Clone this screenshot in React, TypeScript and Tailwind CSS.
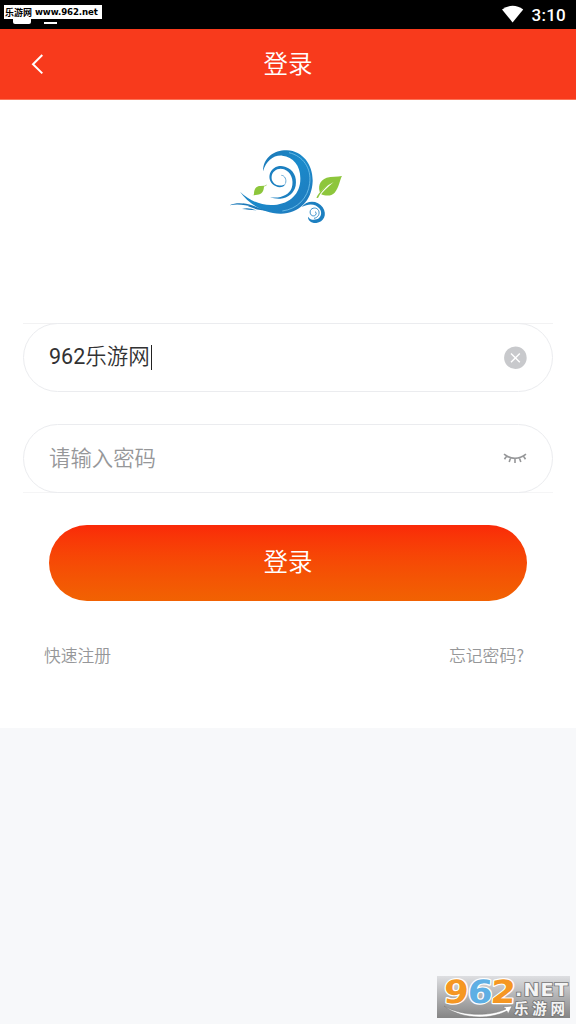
import React from "react";

function StatusBar() {
  return (
    <div className="relative flex h-[29px] items-start justify-end bg-black pr-[10px]">
      <div className="absolute left-[13px] top-[10px] h-[14px] w-[18px] rounded-[2px] bg-white" />
      <div className="absolute left-[44px] top-[22px] h-[2px] w-[13px] bg-white" />
      <div className="absolute left-[4px] top-[5px] flex h-[14px] w-[98px] items-center gap-[3px] whitespace-nowrap bg-white pl-px font-bold leading-none text-black">
        <span className="font-['Noto_Sans_CJK_SC',sans-serif] text-[9px]">乐游网</span>
        <span className="font-['DejaVu_Sans',sans-serif] text-[8.6px] tracking-[-0.1px]">www.962.net</span>
      </div>
      <svg className="mt-[5px] h-[18px] w-[22px]" viewBox="0 0 22 18" fill="#fff">
        <path d="M0 4.4Q5 .8 10.6 .8T21.2 4.4L10.6 17.4Z" />
      </svg>
      <span className="ml-[8px] mt-[5px] font-['Roboto',sans-serif] text-[17px] font-medium leading-[20px] tracking-[0.25px] text-white">3:10</span>
    </div>
  );
}

function Logo() {
  return (
    <svg className="h-[90px] w-[135px]" viewBox="0 0 405 270" fill="none">
      <defs>
        <linearGradient id="wave" x1="0" y1="0" x2="1" y2="1">
          <stop offset="0" stopColor="#1f6fab" />
          <stop offset=".5" stopColor="#1a8acb" />
          <stop offset="1" stopColor="#2178bb" />
        </linearGradient>
      </defs>
      <path fill="url(#wave)" d="M129 94C130 51 164 30 201 31C249 33 279 75 278 124C276 184 235 222 181 221C127 219 84 189 60 155C88 182 124 198 162 195C212 191 241 160 241 117C242 77 220 51 187 47C159 45 139 63 129 94Z" />
      <path stroke="#78c6ee" strokeWidth="2.4" d="M207 38C249 48 275 84 269 130C264 174 232 207 187 213" />
      <path fill="#1c80c1" d="M197 131C192 142 178 144 168 139C151 132 145 115 150 100C157 82 176 74 195 80C220 87 232 111 227 137C222 159 204 174 181 176C170 177 158 174 150 171C178 177 207 166 215 144C223 120 212 95 192 88C174 82 157 93 155 109C153 124 163 134 174 136C185 138 192 135 197 131Z" />
      <path stroke="#1c80c1" strokeWidth="2" d="M184 106C194 106 201 119 196 131" />
      <path fill="#1b79b9" d="M29 196C51 186 79 189 103 201C73 194 50 191 29 196ZM68 190C94 192 115 204 142 212C112 212 87 201 68 190ZM66 207C83 202 96 207 110 211C93 211 80 207 66 207Z" />
      <path fill="#1c7fc0" d="M245 201C261 179 294 181 308 202C323 224 311 247 289 249C273 250 263 240 264 230C271 240 280 241 290 238C304 233 307 217 299 206C287 191 267 189 245 201Z" />
      <path stroke="#1c7fc0" strokeWidth="2.6" d="M282 235C294 233 300 222 296 212C291 201 275 202 271 212C268 223 276 230 284 227C290 224 290 217 285 215" />
      <path fill="#8dc63c" d="M302 162C292 141 298 121 320 113C334 109 352 111 366 108C359 119 358 142 344 158C333 170 316 168 302 162Z" />
      <path fill="#fff" d="M289 171C305 148 321 137 341 126C323 142 309 155 300 167L293 173Z" />
      <path fill="#8dc63c" d="M289 173C300 153 312 143 325 135C313 147 301 158 294 174Z" />
      <path fill="#8dc63c" d="M102 166C101 147 108 138 121 138L132 137C132 153 125 164 112 164Z" />
      <path stroke="#8dc63c" strokeWidth="2" d="M100 166L115 151M132 139L140 135" />
    </svg>
  );
}

function ClearIcon() {
  return (
    <svg className="h-[24px] w-[24px]" viewBox="0 0 24 24" fill="none">
      <circle cx="12.4" cy="11.8" r="11.3" fill="#c8c9cc" />
      <path d="M8 7.4L16.8 16.2M16.8 7.4L8 16.2" stroke="#fff" strokeWidth="1.4" />
    </svg>
  );
}

function ClosedEyeIcon() {
  return (
    <svg className="h-[24px] w-[24px]" viewBox="0 0 24 24" fill="none" stroke="#969799" strokeWidth="1.6">
      <path d="M1 7.2Q12 15.6 23 7.2M3.6 9L1.5 12.2M7.6 10.8L6.2 14.9M12 11.4V15.9M16.4 10.8L17.8 14.9M20.4 9L22.5 12.2" />
    </svg>
  );
}

function Watermark() {
  return (
    <div className="absolute left-[437px] top-[976px] h-[42px] w-[133px] bg-linear-to-b from-[#dedfe2] to-[#858585]">
      <svg className="h-[42px] w-[133px] overflow-visible" viewBox="0 0 133 42">
        <g transform="translate(6 0) skewX(-4)" fontFamily="DejaVu Sans, sans-serif" fontWeight="bold" fontSize="32" stroke="#fff" strokeWidth="2.4" paintOrder="stroke" strokeLinejoin="round">
          <text x="2" y="27" fill="#f59722" textLength="25" lengthAdjust="spacingAndGlyphs">9</text>
          <text x="26" y="27" fill="#5eafe4" textLength="25" lengthAdjust="spacingAndGlyphs">6</text>
          <text x="49" y="27" fill="#f59722" textLength="25" lengthAdjust="spacingAndGlyphs">2</text>
        </g>
        <path d="M7 30C24 40 52 41 69 33L66 31L75 30L71 38L70 35C50 45 22 42 7 30Z" fill="#fff" stroke="#777" strokeWidth=".5" />
        <g fontWeight="bold" fill="#f4f4f4" stroke="#777" strokeWidth="1.6" paintOrder="stroke">
          <text x="78" y="20" fontFamily="DejaVu Sans, sans-serif" fontSize="17" letterSpacing="1" textLength="54" lengthAdjust="spacingAndGlyphs">.NET</text>
          <text x="77" y="37.5" fontFamily="Noto Sans CJK SC, sans-serif" fontSize="14.5" textLength="51">乐游网</text>
        </g>
      </svg>
    </div>
  );
}

export default function App() {
  return (
    <div className="relative h-[1024px] w-[576px] overflow-hidden bg-[#f7f8fa] font-['Roboto','Noto_Sans_CJK_SC',sans-serif]">
      <StatusBar />
      <main className="flex h-[699px] flex-col bg-white">
        <header className="grid h-[71px] shrink-0 grid-cols-[76px_1fr_76px] items-center border-b border-[#fb7458] bg-[#f83a1c] text-white">
          <svg className="ml-[30px] h-[22px] w-[16px]" viewBox="0 0 16 22" fill="none" stroke="currentColor" strokeWidth="2">
            <path d="M12.3 2L3 11.2L12.3 20.4" />
          </svg>
          <h1 className="mt-[2px] text-center text-[24.5px] leading-[36px] font-[350]">登录</h1>
        </header>
        <div className="mt-[40px] flex h-[90px] pl-[220px]">
          <Logo />
        </div>
        <form className="mt-[93px] flex flex-col px-[23px]" onSubmit={(e) => e.preventDefault()}>
          <div className="h-[69px] border-t border-[#f2f2f3]">
            <label className="-mt-px flex h-[69px] items-center justify-between rounded-full border border-[#ebecef] pl-[25px] pr-[25px] text-[21.5px] text-[#323233]">
              <span className="flex items-center">
                <span className="-mt-px leading-[32px]">962<span className="font-[350]">乐游网</span></span>
                <span className="ml-px h-[25px] w-px bg-[#222]" />
              </span>
              <ClearIcon />
            </label>
          </div>
          <div className="mt-[32px] h-[69px] border-b border-[#f5f5f6]">
            <label className="flex h-[69px] items-center justify-between rounded-full border border-[#ebecef] pl-[25px] pr-[25px] text-[21.4px] text-[#969799]">
              <span className="leading-[32px] font-[350]">请输入密码</span>
              <ClosedEyeIcon />
            </label>
          </div>
          <button className="mx-[26px] mt-[32px] flex h-[76px] items-center justify-center rounded-full bg-linear-to-b from-[#fa2908] to-[#f16202] text-[24.5px] text-white font-[350]">登录</button>
        </form>
        <div className="mt-[42px] flex justify-between pl-[44px] pr-[52px] text-[16.8px] leading-[26px] text-[#969799] font-[350]">
          <span>快速注册</span>
          <span className="-mt-px font-['Noto_Sans_CJK_SC',sans-serif]">忘记密码?</span>
        </div>
      </main>
      <Watermark />
    </div>
  );
}
